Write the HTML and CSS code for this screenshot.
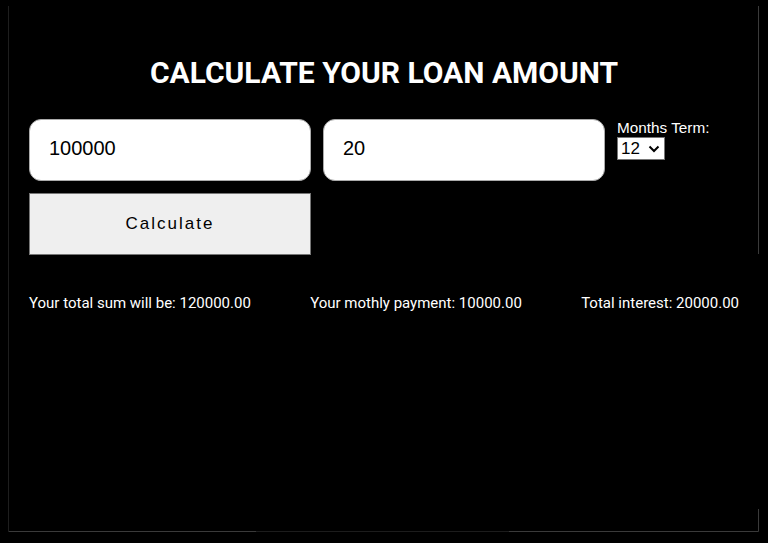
FILE: index.html
```html
<!DOCTYPE html>
<html>
<head>
<meta charset="utf-8">
<link rel="stylesheet" href="styles.css">
</head>
<body>
<div class="frame">
  <h1 class="title">CALCULATE YOUR LOAN AMOUNT</h1>
  <div class="form">
    <div class="row">
      <input class="field" type="text" value="100000">
      <input class="field" type="text" value="20">
      <div class="term">
        <label class="term-label">Months Term:</label>
        <div class="select-wrap">
          <select class="term-select"><option>12</option></select>
          <svg class="chev" width="12" height="8" viewBox="0 0 12 8"><path d="M1.5 1.5 L6 6 L10.5 1.5" fill="none" stroke="#000" stroke-width="2"/></svg>
        </div>
      </div>
    </div>
    <button class="calc">Calculate</button>
  </div>
  <div class="results">
    <span>Your total sum will be: 120000.00</span>
    <span>Your mothly payment: 10000.00</span>
    <span>Total interest: 20000.00</span>
  </div>
  <div class="edge-bottom"></div>
</div>
</body>
</html>
```
FILE: styles.css
```css
html, body {
  margin: 0;
  background: #000;
}
body {
  padding: 6px 9px 11px 8px;
  font-family: Roboto, "Liberation Sans", sans-serif;
  color: #fff;
}
.frame {
  position: relative;
  height: 526px;
  box-sizing: border-box;
  border-left: 1px solid #1e1e1e;
  border-right: 1px solid #3a3a3a;
  border-bottom: 1px solid #1c1c1c;
  padding: 0 19px 0 20px;
}
.frame::after {
  content: "";
  position: absolute;
  right: -1px;
  top: 248px;
  height: 255px;
  width: 1px;
  background: #000;
}
.edge-bottom {
  position: absolute;
  left: 0;
  right: 0;
  bottom: -1px;
  height: 1px;
  background: linear-gradient(to right, #3a3a3a 0, #3a3a3a 247px, #1c1c1c 247px, #1c1c1c 500px, #3a3a3a 500px);
}
.title {
  margin: 0;
  padding-top: 49px;
  font-size: 30px;
  font-weight: 700;
  text-align: center;
  line-height: 35px;
}
.form {
  margin-top: 29px;
  display: flex;
  flex-direction: column;
  gap: 12px;
}
.row {
  display: flex;
  gap: 12px;
  align-items: flex-start;
}
.field {
  width: 282px;
  height: 62px;
  box-sizing: border-box;
  border: 1px solid #aaa;
  border-radius: 12px;
  background: #fff;
  padding: 0 19px 3px;
  font-family: "Liberation Sans", Arial, sans-serif;
  font-size: 20px;
  color: #000;
  outline: none;
}
.term {
  display: flex;
  flex-direction: column;
  align-items: flex-start;
  font-family: "Liberation Sans", Arial, sans-serif;
  font-size: 15.3px;
  line-height: 17px;
}
.term-label {
  color: #fff;
}
.select-wrap {
  position: relative;
  margin-top: 1px;
}
.term-select {
  appearance: none;
  -webkit-appearance: none;
  display: block;
  height: 23px;
  width: 48px;
  box-sizing: border-box;
  font-family: "Liberation Sans", Arial, sans-serif;
  font-size: 17px;
  border: 1px solid #767676;
  border-radius: 0;
  background: #fff;
  color: #000;
  padding: 0 0 0 3px;
  line-height: 21px;
}
.chev {
  position: absolute;
  right: 5px;
  top: 8px;
  pointer-events: none;
}
.calc {
  width: 282px;
  height: 62px;
  box-sizing: border-box;
  background: #efefef;
  border: 1px solid #767676;
  border-radius: 0;
  font-family: "Liberation Sans", Arial, sans-serif;
  font-size: 17px;
  letter-spacing: 2px;
  color: #000;
}
.results {
  margin-top: 40px;
  display: flex;
  justify-content: space-between;
  font-size: 15px;
  line-height: 17px;
}
```
